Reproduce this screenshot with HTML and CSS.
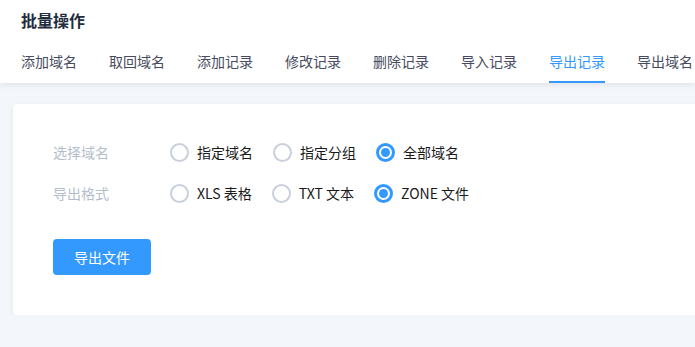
FILE: index.html
```html
<!DOCTYPE html>
<html lang="zh-CN">
<head>
    <meta charset="UTF-8">
    <meta name="viewport" content="width=device-width, initial-scale=1.0">
    <title>批量操作</title>
    <link rel="stylesheet" href="styles.css">
</head>
<body>
    <!-- 顶部标题和标签 -->
    <header class="header">
        <h1 class="title">批量操作</h1>
        <nav class="tabs">
            <a class="tab">添加域名</a>
            <a class="tab">取回域名</a>
            <a class="tab">添加记录</a>
            <a class="tab">修改记录</a>
            <a class="tab">删除记录</a>
            <a class="tab">导入记录</a>
            <a class="tab active">导出记录</a>
            <a class="tab">导出域名</a>
        </nav>
    </header>

    <!-- 表单卡片 -->
    <div class="card">
        <div class="form-row">
            <div class="label">选择域名</div>
            <div class="options">
                <label class="radio"><span class="dot"></span>指定域名</label>
                <label class="radio"><span class="dot"></span>指定分组</label>
                <label class="radio checked"><span class="dot"></span>全部域名</label>
            </div>
        </div>
        <div class="form-row">
            <div class="label">导出格式</div>
            <div class="options">
                <label class="radio"><span class="dot"></span>XLS 表格</label>
                <label class="radio"><span class="dot"></span>TXT 文本</label>
                <label class="radio checked"><span class="dot"></span>ZONE 文件</label>
            </div>
        </div>
        <button class="btn">导出文件</button>
    </div>
</body>
</html>
```

FILE: styles.css
```css
/* 基础 */
body {
    margin: 0;
    background-color: #f3f6fa;
    font-family: "Noto Sans CJK SC", "Noto Sans", sans-serif;
    color: #1a1a1a;
    overflow: hidden;
}

/* 顶部 */
.header {
    background: #fff;
    padding: 0 21px;
    box-shadow: 0 2px 6px rgba(0, 0, 0, 0.08);
    position: relative;
    z-index: 1;
}

.title {
    margin: 0;
    padding: 8px 0 10px;
    font-size: 16px;
    line-height: 24px;
    font-weight: bold;
    color: #1f2d3d;
}

.tabs {
    display: flex;
    gap: 32px;
    white-space: nowrap;
}

.tab {
    font-size: 14px;
    line-height: 20px;
    padding: 9px 0 10px;
    border-bottom: 2px solid transparent;
    color: #474b60;
    flex-shrink: 0;
}

.tab.active {
    color: #3399ff;
    border-bottom-color: #3399ff;
}

/* 卡片 */
.card {
    margin: 21px -20px 0 13px;
    padding: 32px 40px 40px;
    background: #fff;
    border-radius: 4px;
    box-shadow: 0 2px 6px rgba(0, 0, 0, 0.07);
}

.form-row {
    display: flex;
    align-items: center;
    height: 32px;
    margin-bottom: 9px;
}

.label {
    width: 117px;
    font-size: 14px;
    color: #b4bdcc;
}

.options {
    display: flex;
    align-items: center;
}

.radio {
    display: flex;
    align-items: center;
    font-size: 14px;
    margin-right: 20px;
}

.dot {
    box-sizing: border-box;
    width: 19px;
    height: 19px;
    border: 2px solid #c9cfdb;
    border-radius: 50%;
    margin-right: 8px;
    position: relative;
}

.radio.checked .dot {
    border: 3px solid #3399ff;
}

.radio.checked .dot::after {
    content: "";
    position: absolute;
    left: 2px;
    top: 2px;
    width: 9px;
    height: 9px;
    border-radius: 50%;
    background: #3399ff;
}

/* 按钮 */
.btn {
    margin-top: 21px;
    width: 98px;
    height: 36px;
    border: none;
    border-radius: 4px;
    background: #3399ff;
    color: #fff;
    font-family: inherit;
    font-size: 14px;
    cursor: pointer;
}
```
